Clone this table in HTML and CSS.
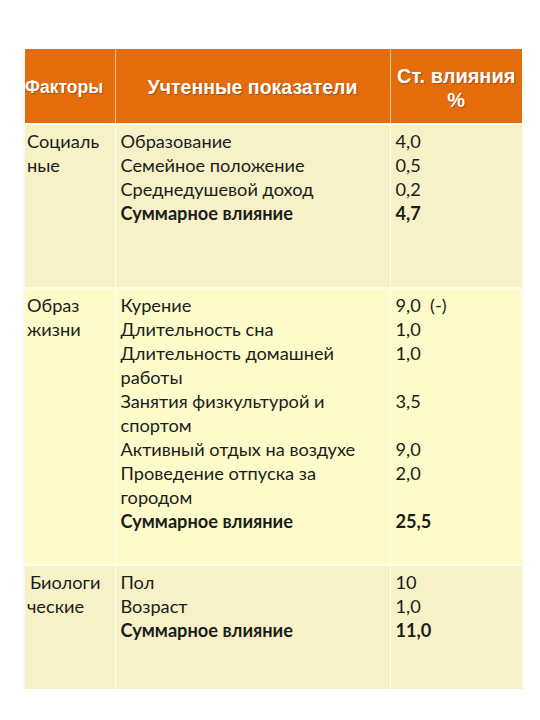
FILE: index.html
```html
<!DOCTYPE html>
<html lang="ru">
<head>
<meta charset="utf-8">
<link rel="stylesheet" href="styles.css">
</head>
<body>
<table class="factors">
  <colgroup>
    <col class="c1"><col class="c2"><col class="c3">
  </colgroup>
  <thead>
    <tr>
      <th class="h-factor">Факторы</th>
      <th class="h-ind">Учтенные показатели</th>
      <th class="h-val">Ст. влияния<br>%</th>
    </tr>
  </thead>
  <tbody>
    <tr class="row-social">
      <td>Социаль<br>ные</td>
      <td>Образование<br>Семейное положение<br>Среднедушевой доход<br><b>Суммарное влияние</b></td>
      <td>4,0<br>0,5<br>0,2<br><b>4,7</b></td>
    </tr>
    <tr class="row-life">
      <td>Образ<br>жизни</td>
      <td>Курение<br>Длительность сна<br>Длительность домашней<br>работы<br>Занятия физкультурой и<br>спортом<br>Активный отдых на воздухе<br>Проведение отпуска за<br>городом<br><b>Суммарное влияние</b></td>
      <td>9,0&nbsp; (-)<br>1,0<br>1,0<br>&nbsp;<br>3,5<br>&nbsp;<br>9,0<br>2,0<br>&nbsp;<br><b>25,5</b></td>
    </tr>
    <tr class="row-bio">
      <td><span class="lead">Биологи</span><br>ческие</td>
      <td>Пол<br>Возраст<br><b>Суммарное влияние</b></td>
      <td>10<br>1,0<br><b>11,0</b></td>
    </tr>
  </tbody>
</table>
</body>
</html>
```

FILE: styles.css
```css
html, body {
  margin: 0;
  padding: 0;
  background: #ffffff;
}

body {
  padding: 49px 0 0 25px;
}

.factors {
  border-collapse: collapse;
  table-layout: fixed;
  width: 497px;
  box-shadow: 0 3px 4px rgba(120, 110, 60, 0.12);
}

.c1 { width: 90px; }
.c2 { width: 275px; }
.c3 { width: 132px; }

.factors th {
  background: #e46c0b;
  color: #ffffff;
  font-family: "Liberation Sans", Arial, sans-serif;
  font-weight: bold;
  text-shadow: 1px 1px 1px rgba(90, 40, 0, 0.45);
  height: 71px;
  padding: 3px 0 0 0;
  border-left: 1px solid rgba(255, 230, 200, 0.75);
  border-bottom: 1px solid rgba(255, 240, 220, 0.8);
  vertical-align: middle;
}

.factors th:first-child { border-left: none; }

.h-factor {
  font-size: 17.5px;
  text-align: left;
  padding-left: 2px;
}

.h-ind {
  font-size: 19.5px;
  text-align: center;
}

.h-val {
  font-size: 20px;
  line-height: 24px;
  text-align: center;
}

.factors td {
  font-family: Lato, "Open Sans", sans-serif;
  font-size: 18.2px;
  line-height: 24px;
  color: #1c1c1c;
  vertical-align: top;
  padding: 4px 0 0 5px;
  border-left: 1px solid rgba(255, 255, 240, 0.9);
  border-top: 2px solid #fdfde8;
}

.factors td:first-child {
  border-left: none;
  padding-left: 2px;
}

.factors td b { font-weight: bold; }

.row-social td { background: #f6f1c6; height: 158px; }
.row-life td { background: #fdfbca; height: 271px; }
.row-bio td { background: #f6f1c6; height: 119px; }

.lead { padding-left: 3px; }
```
